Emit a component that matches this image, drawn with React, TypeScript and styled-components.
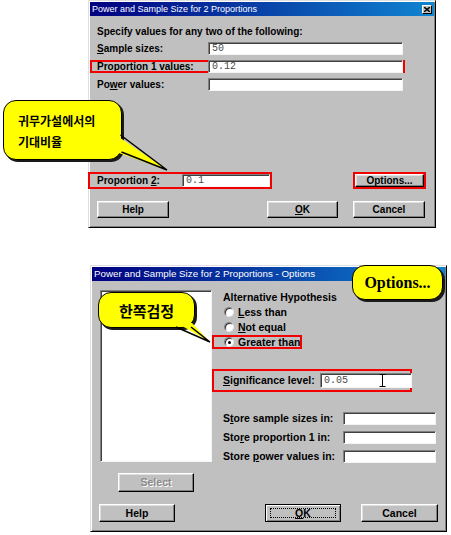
import React from "react";
import styled, { createGlobalStyle, css } from "styled-components";

const GlobalStyle = createGlobalStyle`
  html, body {
    margin: 0;
    padding: 0;
    background: #ffffff;
  }
  body {
    font-family: "Liberation Sans", Arial, sans-serif;
    color: #000;
  }
`;

const RED = "#f20000";

const Page = styled.div`
  position: relative;
  width: 451px;
  height: 535px;
  overflow: hidden;
  display: flex;
  flex-direction: column;
`;

const Window = styled.div<{ $left: number; $top: number; $width: number; $height: number; $fs: number }>`
  margin: ${(p) => p.$top}px 0 0 ${(p) => p.$left}px;
  width: ${(p) => p.$width}px;
  height: ${(p) => p.$height}px;
  box-sizing: border-box;
  background: #c0c0c0;
  border: 1px solid;
  border-color: #dfdfdf #000 #000 #dfdfdf;
  box-shadow: inset 1px 1px 0 #fff, inset -1px -1px 0 #808080;
  padding: 1px;
  display: flex;
  flex-direction: column;
  font-size: ${(p) => p.$fs}px;
  font-weight: 700;
`;

const TitleBar = styled.div<{ $fs: number }>`
  height: 14px;
  flex: none;
  display: flex;
  align-items: center;
  padding-left: 2px;
  background: linear-gradient(to right, #000080, #1084d0);
  color: #fff;
  font-weight: 400;
  font-size: ${(p) => p.$fs}px;
  white-space: nowrap;
`;

const TitleText = styled.span`
  flex: 1;
  line-height: 14px;
`;

const CloseBox = styled.div`
  width: 10px;
  height: 9px;
  margin-right: 2px;
  box-sizing: border-box;
  background: #c0c0c0;
  border: 1px solid;
  border-color: #fff #000 #000 #fff;
  display: flex;
  align-items: center;
  justify-content: center;
`;

/* ---------- top dialog ---------- */

const TopBody = styled.div`
  flex: 1;
  display: flex;
  flex-direction: column;
  padding-top: 10px;
`;

const Heading = styled.div<{ $indent: number }>`
  padding-left: ${(p) => p.$indent}px;
  line-height: 12px;
  height: 12px;
  white-space: nowrap;
`;

const FieldRow = styled.div<{ $cols: string; $h: number; $indent: number; $marked?: boolean }>`
  display: grid;
  grid-template-columns: ${(p) => p.$cols};
  align-items: center;
  width: fit-content;
  height: ${(p) => p.$h}px;
  padding: 0 2px 0 ${(p) => p.$indent}px;
  white-space: nowrap;
  ${(p) =>
    p.$marked &&
    css`
      outline: 2px solid ${RED};
      outline-offset: -2px;
    `}
`;

const Label = styled.span`
  line-height: 13px;
`;

const TextBox = styled.div<{ $w: number; $h: number }>`
  position: relative;
  width: ${(p) => p.$w}px;
  height: ${(p) => p.$h}px;
  box-sizing: border-box;
  background: #fff;
  border: 1px solid;
  border-color: #808080 #f4f4f4 #f4f4f4 #808080;
  box-shadow: inset 1px 1px 0 #404040;
  padding-left: 3px;
  font-family: "Liberation Mono", "Courier New", monospace;
  font-weight: 400;
  font-size: 10px;
  line-height: ${(p) => p.$h - 2}px;
  color: #4a4a4a;
`;

const BottomArea = styled.div`
  margin-top: auto;
  padding-bottom: 8px;
  display: flex;
  flex-direction: column;
  gap: 12px;
`;

const OptionRow = styled.div`
  display: flex;
  align-items: center;
  justify-content: space-between;
  height: 17px;
  margin-left: -2px;
  padding-right: 10px;
`;

const ButtonRow = styled.div<{ $gap: number; $pl: number; $pr: number }>`
  display: flex;
  align-items: center;
  padding: 0 ${(p) => p.$pr}px 0 ${(p) => p.$pl}px;
  & > *:nth-child(2) {
    margin-left: auto;
    margin-right: ${(p) => p.$gap}px;
  }
`;

const Button = styled.div<{ $w: number; $h: number; $marked?: boolean; $default?: boolean; $disabled?: boolean }>`
  width: ${(p) => p.$w}px;
  height: ${(p) => p.$h}px;
  box-sizing: border-box;
  flex: none;
  background: #c0c0c0;
  border: 1px solid;
  border-color: #fff #000 #000 #fff;
  box-shadow: inset -1px -1px 0 #808080, inset 1px 1px 0 #dfdfdf;
  display: flex;
  align-items: center;
  justify-content: center;
  line-height: 1;
  white-space: nowrap;
  ${(p) =>
    p.$marked &&
    css`
      outline: 2px solid ${RED};
      outline-offset: 0;
    `}
  ${(p) =>
    p.$default &&
    css`
      border-color: #000;
      box-shadow: inset 1px 1px 0 #fff, inset -1px -1px 0 #808080;
    `}
  ${(p) =>
    p.$disabled &&
    css`
      color: #8a8a8a;
      text-shadow: 1px 1px 0 #fff;
    `}
`;

const FocusRing = styled.span`
  display: flex;
  align-items: center;
  justify-content: center;
  width: calc(100% - 8px);
  height: calc(100% - 6px);
  border: 1px dotted #000;
  box-sizing: border-box;
`;

/* ---------- options dialog ---------- */

const OptBody = styled.div`
  flex: 1;
  display: flex;
  flex-direction: column;
`;

const Columns = styled.div`
  display: flex;
  padding: 9px 0 0 8px;
`;

const LeftCol = styled.div`
  width: 112px;
  display: flex;
  flex-direction: column;
  align-items: center;
  gap: 11px;
`;

const ListBox = styled.div`
  width: 112px;
  height: 172px;
  box-sizing: border-box;
  background: #fff;
  border: 1px solid;
  border-color: #808080 #f4f4f4 #f4f4f4 #808080;
  box-shadow: inset 1px 1px 0 #404040;
`;

const RightCol = styled.div`
  display: flex;
  flex-direction: column;
  padding-top: 1px;
`;

const RadioGroup = styled.div`
  display: flex;
  flex-direction: column;
  gap: 1px;
  margin-top: 2px;
`;

const RadioRow = styled.div<{ $marked?: boolean }>`
  display: flex;
  align-items: center;
  gap: 4px;
  width: 90px;
  height: 14px;
  box-sizing: border-box;
  padding-left: 12px;
  white-space: nowrap;
  ${(p) =>
    p.$marked &&
    css`
      outline: 2px solid ${RED};
      outline-offset: -2px;
    `}
`;

const RadioDot = styled.span<{ $on?: boolean }>`
  position: relative;
  width: 10px;
  height: 10px;
  box-sizing: border-box;
  border-radius: 50%;
  background: #fff;
  border: 1px solid;
  border-color: #808080 #e8e8e8 #e8e8e8 #808080;
  box-shadow: inset 1px 1px 0 #303030;
  ${(p) =>
    p.$on &&
    css`
      &::after {
        content: "";
        position: absolute;
        left: 3px;
        top: 3px;
        width: 3px;
        height: 3px;
        border-radius: 50%;
        background: #000;
      }
    `}
`;

const StoreGroup = styled.div`
  display: flex;
  flex-direction: column;
  gap: 6px;
  margin-top: 20px;
`;

const Footer = styled.div`
  margin-top: auto;
  padding-bottom: 8px;
`;

const IBeam = styled.svg`
  position: absolute;
  left: 58px;
  top: 0;
`;

/* ---------- annotation callouts ---------- */

const Callout = styled.div<{ $x: number; $y: number; $w: number; $h: number; $serif?: boolean; $fs: number }>`
  position: absolute;
  left: ${(p) => p.$x}px;
  top: ${(p) => p.$y}px;
  width: ${(p) => p.$w}px;
  height: ${(p) => p.$h}px;
  box-sizing: border-box;
  background: #ffff00;
  border: 1.5px solid #000;
  border-radius: 13px;
  box-shadow: 2px 2px 0 #1a1a1a;
  font-family: ${(p) =>
    p.$serif ? '"Liberation Serif", "Times New Roman", serif' : '"Noto Sans CJK KR", "Noto Sans", sans-serif'};
  font-weight: 700;
  font-size: ${(p) => p.$fs}px;
  color: #000;
`;

const CalloutLines = styled.div`
  padding: 9px 0 0 14px;
  line-height: 21px;
`;

const CalloutCenter = styled.div`
  height: 100%;
  display: flex;
  align-items: center;
  justify-content: center;
`;

const Tail = styled.svg<{ $x: number; $y: number }>`
  position: absolute;
  left: ${(p) => p.$x}px;
  top: ${(p) => p.$y}px;
  overflow: visible;
`;

export default function App() {
  return (
    <>
      <GlobalStyle />
      <Page>
        {/* main dialog */}
        <Window $left={88} $top={0} $width={348} $height={228} $fs={10}>
          <TitleBar $fs={9}>
            <TitleText>Power and Sample Size for 2 Proportions</TitleText>
            <CloseBox>
              <svg width="6" height="5" viewBox="0 0 6 5">
                <path d="M0 0L6 5M6 0L0 5" stroke="#000" strokeWidth="1.4" />
              </svg>
            </CloseBox>
          </TitleBar>
          <TopBody>
            <Heading $indent={7} style={{ marginBottom: 4 }}>
              Specify values for any two of the following:
            </Heading>
            <FieldRow $cols="111px 195px" $h={13} $indent={7}>
              <Label>
                <u>S</u>ample sizes:
              </Label>
              <TextBox $w={195} $h={13}>50</TextBox>
            </FieldRow>
            <FieldRow $cols="111px 195px" $h={13} $indent={7} $marked style={{ marginTop: 5 }}>
              <Label>
                P<u>r</u>oportion 1 values:
              </Label>
              <TextBox $w={195} $h={13}>0.12</TextBox>
            </FieldRow>
            <FieldRow $cols="111px 195px" $h={13} $indent={7} style={{ marginTop: 5 }}>
              <Label>
                Po<u>w</u>er values:
              </Label>
              <TextBox $w={195} $h={13}></TextBox>
            </FieldRow>

            <BottomArea>
              <OptionRow>
                <FieldRow $cols="85px 88px" $h={17} $indent={9} $marked>
                  <Label>
                    Proportion <u>2</u>:
                  </Label>
                  <TextBox $w={88} $h={13}>0.1</TextBox>
                </FieldRow>
                <Button $w={69} $h={13} $marked>
                  Options...
                </Button>
              </OptionRow>
              <ButtonRow $gap={15} $pl={7} $pr={9}>
                <Button $w={72} $h={17}>Help</Button>
                <Button $w={71} $h={17}>
                  <u>O</u>K
                </Button>
                <Button $w={72} $h={17}>Cancel</Button>
              </ButtonRow>
            </BottomArea>
          </TopBody>
        </Window>

        {/* options dialog */}
        <Window $left={90} $top={37} $width={357} $height={267} $fs={10.5}>
          <TitleBar $fs={9.75}>
            <TitleText>Power and Sample Size for 2 Proportions - Options</TitleText>
          </TitleBar>
          <OptBody>
            <Columns>
              <LeftCol>
                <ListBox />
                <Button $w={76} $h={19} $disabled>
                  Select
                </Button>
              </LeftCol>
              <RightCol>
                <Heading $indent={11}>Alternative Hypothesis</Heading>
                <RadioGroup>
                  <RadioRow>
                    <RadioDot />
                    <span>
                      <u>L</u>ess than
                    </span>
                  </RadioRow>
                  <RadioRow>
                    <RadioDot />
                    <span>
                      <u>N</u>ot equal
                    </span>
                  </RadioRow>
                  <RadioRow $marked>
                    <RadioDot $on />
                    <span>
                      <u>G</u>reater than
                    </span>
                  </RadioRow>
                </RadioGroup>

                <FieldRow $cols="97px 92px" $h={23} $indent={11} $marked style={{ marginTop: 20, paddingRight: 0 }}>
                  <Label>
                    <u>S</u>ignificance level:
                  </Label>
                  <TextBox $w={92} $h={15}>
                    0.05
                    <IBeam width="7" height="13" viewBox="0 0 7 13">
                      <path d="M0.5 0.5H6.5M3.5 0.5V12.5M0.5 12.5H6.5" stroke="#000" strokeWidth="1" fill="none" />
                    </IBeam>
                  </TextBox>
                </FieldRow>

                <StoreGroup>
                  <FieldRow $cols="120px 93px" $h={13} $indent={11}>
                    <Label>
                      S<u>t</u>ore sample sizes in:
                    </Label>
                    <TextBox $w={93} $h={13} />
                  </FieldRow>
                  <FieldRow $cols="120px 93px" $h={13} $indent={11}>
                    <Label>
                      Sto<u>r</u>e proportion 1 in:
                    </Label>
                    <TextBox $w={93} $h={13} />
                  </FieldRow>
                  <FieldRow $cols="120px 93px" $h={13} $indent={11}>
                    <Label>
                      Store <u>p</u>ower values in:
                    </Label>
                    <TextBox $w={93} $h={13} />
                  </FieldRow>
                </StoreGroup>
              </RightCol>
            </Columns>
            <Footer>
              <ButtonRow $gap={20} $pl={7} $pr={7}>
                <Button $w={76} $h={18}>Help</Button>
                <Button $w={76} $h={18} $default>
                  <FocusRing>
                    <u>O</u>K
                  </FocusRing>
                </Button>
                <Button $w={77} $h={18}>Cancel</Button>
              </ButtonRow>
            </Footer>
          </OptBody>
        </Window>

        {/* annotations */}
        <Callout $x={3} $y={100} $w={119} $h={60} $fs={12}>
          <CalloutLines>
            귀무가설에서의
            <br />
            기대비율
          </CalloutLines>
        </Callout>
        <Tail $x={110} $y={130} width="60" height="42" viewBox="0 0 60 42">
          <polygon points="6,5 57,40 6,22" fill="#ffff00" />
          <path d="M10.5 5L57 40M11.5 22L57 40" stroke="#000" strokeWidth="1.5" fill="none" />
        </Tail>

        <Callout $x={98} $y={292} $w={97} $h={36} $fs={15}>
          <CalloutCenter>한쪽검정</CalloutCenter>
        </Callout>
        <Tail $x={170} $y={320} width="42" height="24" viewBox="0 0 42 24">
          <polygon points="7,3 22,3 40,22" fill="#ffff00" />
          <path d="M6 7L40 22M21 7L40 22" stroke="#000" strokeWidth="1.5" fill="none" />
        </Tail>

        <Callout $x={352} $y={265} $w={91} $h={35} $fs={16} $serif>
          <CalloutCenter>Options...</CalloutCenter>
        </Callout>
      </Page>
    </>
  );
}
